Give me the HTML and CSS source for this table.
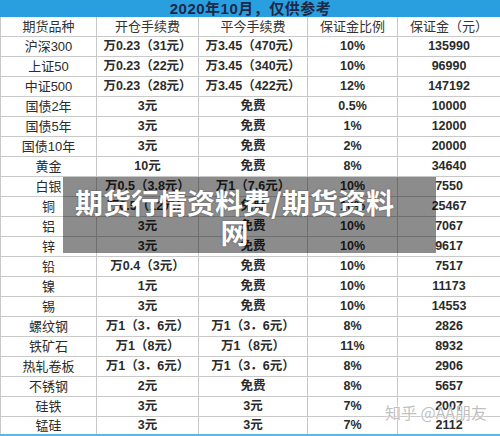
FILE: index.html
```html
<!DOCTYPE html>
<html lang="zh">
<head>
    <meta charset="UTF-8">
    <title>期货手续费保证金</title><link rel="stylesheet" href="styles.css">
</head>
<body>
    <div class="sheet">
        <table class="fee-table">
            <colgroup>
                <col class="c1"><col class="c2"><col class="c3"><col class="c4"><col class="c5">
            </colgroup>
            <thead>
                <tr class="title-row"><th colspan="5">2020年10月，仅供参考</th></tr>
                <tr class="head-row">
                    <th>期货品种</th><th>开仓手续费</th><th>平今手续费</th><th>保证金比例</th><th>保证金（元）</th>
                </tr>
            </thead>
            <tbody>
                <tr><td class="name">沪深300</td><td>万0.23（31元）</td><td>万3.45（470元）</td><td>10%</td><td>135990</td></tr>
                <tr><td class="name">上证50</td><td>万0.23（22元）</td><td>万3.45（340元）</td><td>10%</td><td>96990</td></tr>
                <tr><td class="name">中证500</td><td>万0.23（28元）</td><td>万3.45（422元）</td><td>12%</td><td>147192</td></tr>
                <tr><td class="name">国债2年</td><td>3元</td><td>免费</td><td>0.5%</td><td>10000</td></tr>
                <tr><td class="name">国债5年</td><td>3元</td><td>免费</td><td>1%</td><td>12000</td></tr>
                <tr><td class="name">国债10年</td><td>3元</td><td>免费</td><td>2%</td><td>20000</td></tr>
                <tr><td class="name">黄金</td><td>10元</td><td>免费</td><td>8%</td><td>34640</td></tr>
                <tr><td class="name">白银</td><td>万0.5（3.8元）</td><td>万1（7.6元）</td><td>10%</td><td>7550</td></tr>
                <tr><td class="name">铜</td><td>万0.5（12元）</td><td>免费</td><td>10%</td><td>25467</td></tr>
                <tr><td class="name">铝</td><td>3元</td><td>免费</td><td>10%</td><td>7067</td></tr>
                <tr><td class="name">锌</td><td>3元</td><td>免费</td><td>10%</td><td>9617</td></tr>
                <tr><td class="name">铅</td><td>万0.4（3元）</td><td>免费</td><td>10%</td><td>7517</td></tr>
                <tr><td class="name">镍</td><td>1元</td><td>免费</td><td>10%</td><td>11173</td></tr>
                <tr><td class="name">锡</td><td>3元</td><td>免费</td><td>10%</td><td>14553</td></tr>
                <tr><td class="name">螺纹钢</td><td>万1（3．6元）</td><td>万1（3．6元）</td><td>8%</td><td>2826</td></tr>
                <tr><td class="name">铁矿石</td><td>万1（8元）</td><td>万1（8元）</td><td>11%</td><td>8932</td></tr>
                <tr><td class="name">热轧卷板</td><td>万1（3．6元）</td><td>万1（3．6元）</td><td>8%</td><td>2906</td></tr>
                <tr><td class="name">不锈钢</td><td>2元</td><td>免费</td><td>8%</td><td>5657</td></tr>
                <tr><td class="name">硅铁</td><td>3元</td><td>3元</td><td>7%</td><td>2007</td></tr>
                <tr class="last-row"><td class="name">锰硅</td><td>3元</td><td>3元</td><td>7%</td><td>2112</td></tr>
            </tbody>
        </table>

        <!-- overlays on top of the picture -->
        <div class="banner">期货行情资料费/期货资料网</div>
        <div class="watermark">知乎 @AA朋友</div>
    </div>
</body>
</html>
```

FILE: styles.css
```css
/* styles.css */
body {
    margin: 0;
    background-color: #ffffff;
    font-family: "Liberation Sans", "Noto Sans CJK SC", sans-serif;
}

.sheet {
    position: relative;
    width: 500px;
    height: 436px;
    overflow: hidden;
}

.fee-table {
    width: 500px;
    border-collapse: collapse;
    table-layout: fixed;
    color: #2b2b2b;
    font-size: 12.5px;
}

.c1 { width: 96px; }
.c2 { width: 102px; }
.c3 { width: 109px; }
.c4 { width: 90px; }
.c5 { width: 103px; }

.fee-table th,
.fee-table td {
    height: 19px;
    padding: 0;
    text-align: center;
    border: 1px solid #c9c9c9;
    line-height: 19px;
    white-space: nowrap;
}

.fee-table td {
    font-weight: bold;
}

.fee-table td.name {
    font-weight: normal;
    font-size: 13px;
}

.title-row th {
    height: 15px;
    line-height: 15px;
    background-color: #2a9fe0;
    border-color: #2a9fe0;
    color: #1b2a48;
    font-size: 15px;
    font-weight: bold;
    letter-spacing: 0.5px;
}

.head-row th {
    font-weight: normal;
    font-size: 13px;
    color: #333333;
}

.last-row td {
    height: 17px;
    line-height: 17px;
    border-bottom: 3px solid #5db6e8;
}

.banner {
    position: absolute;
    left: 63px;
    top: 177px;
    width: 373px;
    height: 76px;
    box-sizing: border-box;
    padding: 10px 34px 0 4px;
    background-color: rgba(0, 0, 0, 0.45);
    color: #ffffff;
    font-family: "Noto Sans CJK SC", sans-serif;
    font-size: 28px;
    font-weight: bold;
    line-height: 30px;
    text-align: center;
    text-shadow: 0 0 2px rgba(0, 0, 0, 0.4);
}

.watermark {
    position: absolute;
    right: 13px;
    bottom: 12px;
    font-family: "Noto Sans CJK SC", sans-serif;
    font-size: 16px;
    color: rgba(170, 170, 170, 0.75);
    text-shadow: 0 0 1px #ffffff, 0 0 2px #ffffff;
}
```
